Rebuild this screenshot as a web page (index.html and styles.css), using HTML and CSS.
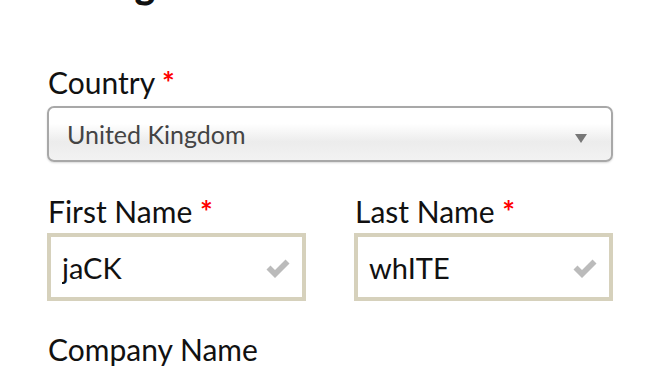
FILE: index.html
```html
<!DOCTYPE html>
<html lang="en">
<head>
  <meta charset="UTF-8" />
  <meta name="viewport" content="width=device-width, initial-scale=1.0"/>
  <title>Billing</title>
  <link rel="stylesheet" href="styles.css">
</head>
<body>

  <!-- Form -->
  <main class="billing">
    <h1 class="page-title">Billing</h1>

    <div class="field field-country">
      <label for="country">Country <span class="req">*</span></label>
      <div class="select-wrap">
        <select id="country">
          <option>United Kingdom</option>
          <option>United States</option>
          <option>Ireland</option>
        </select>
      </div>
    </div>

    <div class="row">
      <div class="field">
        <label for="firstName">First Name <span class="req">*</span></label>
        <div class="input-wrap">
          <input type="text" id="firstName" value="jaCK">
          <svg class="check" viewBox="0 0 24 20" width="24" height="20"><path d="M0.5 11.5l4-4 4.5 4.5 10.5-10.5 4 4-14.5 14.5z"/></svg>
        </div>
      </div>
      <div class="field">
        <label for="lastName">Last Name <span class="req">*</span></label>
        <div class="input-wrap">
          <input type="text" id="lastName" value="whITE">
          <svg class="check" viewBox="0 0 24 20" width="24" height="20"><path d="M0.5 11.5l4-4 4.5 4.5 10.5-10.5 4 4-14.5 14.5z"/></svg>
        </div>
      </div>
    </div>

    <div class="field field-company">
      <label for="company">Company Name</label>
    </div>
  </main>

</body>
</html>
```

FILE: styles.css
```css
* { box-sizing: border-box; margin: 0; padding: 0; }
body { font-family: 'Source Sans Pro', Lato, 'Open Sans', sans-serif; background: #fff; color: #111; overflow: hidden; }

.billing {
  width: 566px;
  margin-left: 47px;
}

.page-title {
  font-size: 38px;
  line-height: 40px;
  font-weight: 800;
  margin-top: -36px;
  margin-left: 1px;
  height: 40px;
}

.field label {
  display: block;
  font-size: 30px;
  line-height: 34px;
  margin-left: 1px;
  margin-bottom: 5px;
}

.req {
  color: #f00;
  font-weight: bold;
  font-size: 30px;
}

.field-country { margin-top: 61px; }
.field-country label { margin-bottom: 7px; }

.select-wrap {
  position: relative;
}

.select-wrap::after {
  content: "";
  position: absolute;
  right: 26px;
  top: 28px;
  border-left: 6px solid transparent;
  border-right: 6px solid transparent;
  border-top: 9px solid #777;
}

.select-wrap select {
  appearance: none;
  -webkit-appearance: none;
  width: 566px;
  height: 56px;
  padding: 0 18px;
  font-family: inherit;
  font-size: 25px;
  color: #444;
  background: linear-gradient(#fff, #fff 30%, #ececec 65%, #f2f2f2);
  border: 2px solid #a8a8a8;
  border-radius: 7px;
  box-shadow: 0 1px 2px rgba(0,0,0,0.15);
  outline: none;
}

.row {
  display: grid;
  grid-template-columns: 259px 259px;
  gap: 48px;
  margin-top: 32px;
}

.input-wrap {
  position: relative;
}

.input-wrap input {
  width: 100%;
  height: 68px;
  border: 4px solid #d6d1bc;
  padding: 0 50px 0 11px;
  font-family: inherit;
  font-size: 29px;
  color: #111;
  outline: none;
}

.check {
  position: absolute;
  right: 16px;
  top: 25px;
  fill: #bbb;
}

.field-company { margin-top: 31px; }
```
